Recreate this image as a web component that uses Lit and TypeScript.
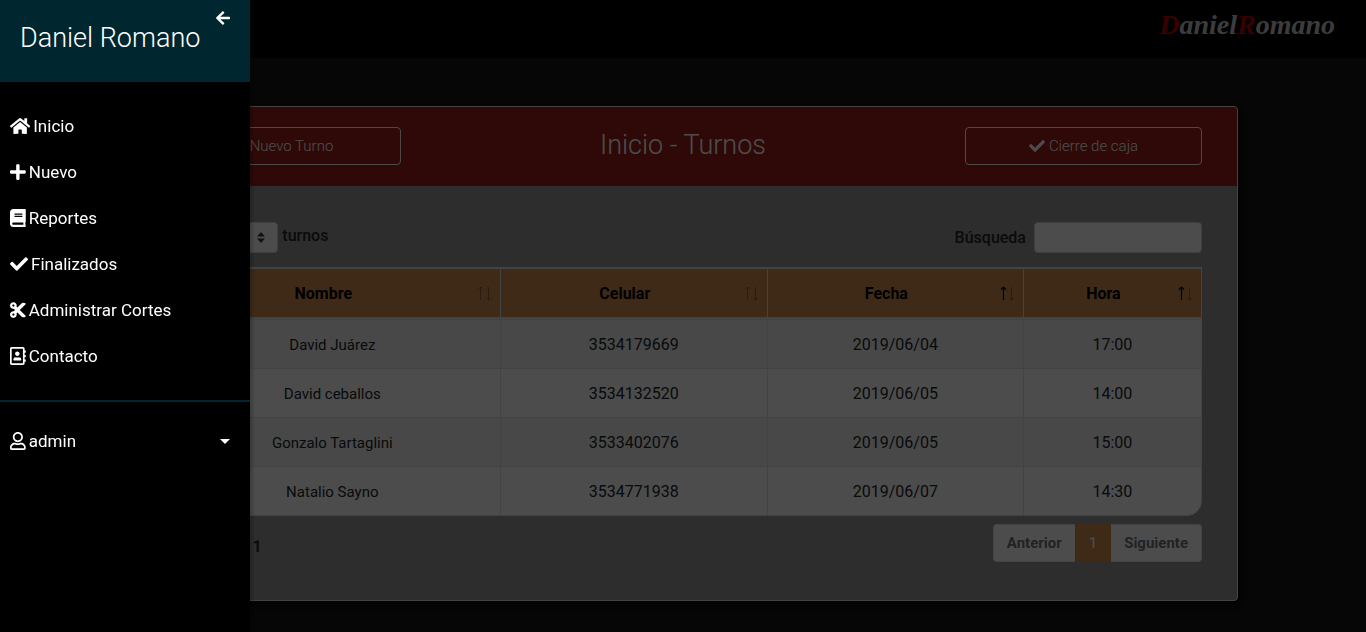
import { LitElement, html, css, svg } from "lit";
import { customElement, property } from "lit/decorators.js";

const ICONS: Record<string, [number, string]> = {
  check: [512, "M173.898 439.404l-166.4-166.4c-9.997-9.997-9.997-26.206 0-36.204l36.203-36.204c9.997-9.998 26.207-9.998 36.204 0L192 312.69 432.095 72.596c9.997-9.997 26.207-9.997 36.204 0l36.203 36.204c9.997 9.997 9.997 26.206 0 36.204l-294.4 294.401c-9.998 9.997-26.207 9.997-36.204-.001z"],
  plus: [448, "M416 208H272V64c0-17.67-14.33-32-32-32h-32c-17.67 0-32 14.33-32 32v144H32c-17.67 0-32 14.33-32 32v32c0 17.67 14.33 32 32 32h144v144c0 17.67 14.33 32 32 32h32c17.67 0 32-14.33 32-32V304h144c17.67 0 32-14.33 32-32v-32c0-17.67-14.33-32-32-32z"],
  book: [448, "M448 360V24c0-13.3-10.7-24-24-24H96C43 0 0 43 0 96v320c0 53 43 96 96 96h328c13.3 0 24-10.7 24-24v-16c0-7.5-3.5-14.3-8.9-18.7-4.2-15.4-4.2-59.3 0-74.7 5.4-4.3 8.9-11.1 8.9-18.6zM128 134c0-3.3 2.7-6 6-6h212c3.3 0 6 2.7 6 6v20c0 3.3-2.7 6-6 6H134c-3.3 0-6-2.7-6-6v-20zm0 64c0-3.3 2.7-6 6-6h212c3.3 0 6 2.7 6 6v20c0 3.3-2.7 6-6 6H134c-3.3 0-6-2.7-6-6v-20zm253.4 250H96c-17.7 0-32-14.3-32-32 0-17.6 14.4-32 32-32h285.4c-1.9 17.1-1.9 46.9 0 64z"],
  home: [576, "M280.37 148.26L96 300.11V464a16 16 0 0 0 16 16l112.06-.29a16 16 0 0 0 15.92-16V368a16 16 0 0 1 16-16h64a16 16 0 0 1 16 16v95.64a16 16 0 0 0 16 16.05L464 480a16 16 0 0 0 16-16V300L295.67 148.26a12.19 12.19 0 0 0-15.3 0zM571.6 251.47L488 182.56V44.05a12 12 0 0 0-12-12h-56a12 12 0 0 0-12 12v72.61L318.47 43a48 48 0 0 0-61 0L4.34 251.47a12 12 0 0 0-1.6 16.9l25.5 31A12 12 0 0 0 45.15 301l235.22-193.74a12.19 12.19 0 0 1 15.3 0L530.9 301a12 12 0 0 0 16.9-1.6l25.5-31a12 12 0 0 0-1.7-16.93z"],
  cut: [448, "M278.06 256L444.48 89.57c4.69-4.69 4.69-12.29 0-16.97-32.8-32.8-85.99-32.8-118.79 0L210.18 188.12l-24.86-24.86c4.31-10.92 6.68-22.81 6.68-35.26 0-53.02-42.98-96-96-96S0 74.98 0 128s42.98 96 96 96c4.54 0 8.99-.32 13.36-.93L142.29 256l-32.93 32.93c-4.37-.61-8.83-.93-13.36-.93-53.02 0-96 42.98-96 96s42.98 96 96 96 96-42.98 96-96c0-12.45-2.37-24.34-6.68-35.26l24.86-24.86L325.69 439.4c32.8 32.8 85.99 32.8 118.79 0 4.69-4.68 4.69-12.28 0-16.97L278.06 256zM96 160c-17.64 0-32-14.36-32-32s14.36-32 32-32 32 14.36 32 32-14.36 32-32 32zm0 256c-17.64 0-32-14.36-32-32s14.36-32 32-32 32 14.36 32 32-14.36 32-32 32z"],
  contact: [448, "M436 160c6.6 0 12-5.4 12-12v-40c0-6.6-5.4-12-12-12h-20V48c0-26.5-21.5-48-48-48H48C21.5 0 0 21.5 0 48v416c0 26.5 21.5 48 48 48h320c26.5 0 48-21.5 48-48v-48h20c6.6 0 12-5.4 12-12v-40c0-6.6-5.4-12-12-12h-20v-64h20c6.6 0 12-5.4 12-12v-40c0-6.6-5.4-12-12-12h-20v-64h20zm-68 304H48V48h320v416zM208 256c35.3 0 64-28.7 64-64s-28.7-64-64-64-64 28.7-64 64 28.7 64 64 64zm-89.6 128h179.2c12.4 0 22.4-8.6 22.4-19.2v-19.2c0-31.8-30.1-57.6-67.2-57.6-10.8 0-18.7 8-44.8 8-26.9 0-33.4-8-44.8-8-37.1 0-67.2 25.8-67.2 57.6v19.2c0 10.6 10 19.2 22.4 19.2z"],
  user: [448, "M313.6 304c-28.7 0-42.5 16-89.6 16-47.1 0-60.8-16-89.6-16C60.2 304 0 364.2 0 438.4V464c0 26.5 21.5 48 48 48h352c26.5 0 48-21.5 48-48v-25.6c0-74.2-60.2-134.4-134.4-134.4zM400 464H48v-25.6c0-47.6 38.8-86.4 86.4-86.4 14.6 0 38.3 16 89.6 16 51.7 0 74.9-16 89.6-16 47.6 0 86.4 38.8 86.4 86.4V464zM224 288c79.5 0 144-64.5 144-144S303.5 0 224 0 80 64.5 80 144s64.5 144 144 144zm0-240c52.9 0 96 43.1 96 96s-43.1 96-96 96-96-43.1-96-96 43.1-96 96-96z"],
  back: [448, "M257.5 445.1l-22.2 22.2c-9.4 9.4-24.6 9.4-33.9 0L7 273c-9.4-9.4-9.4-24.6 0-33.9L201.4 44.7c9.4-9.4 24.6-9.4 33.9 0l22.2 22.2c9.5 9.5 9.3 25-.4 34.3L136.6 216H424c13.3 0 24 10.7 24 24v32c0 13.3-10.7 24-24 24H136.6l120.5 114.8c9.8 9.3 10 24.8.4 34.3z"],
};

/** Monochrome glyph, one em tall, coloured by the surrounding text. */
@customElement("app-icon")
export class AppIcon extends LitElement {
  @property() name = "check";

  static styles = css`
    :host { display: inline-flex; flex: none; }
    svg { display: block; height: 1em; width: auto; fill: currentColor; }
  `;

  render() {
    const [width, path] = ICONS[this.name];
    return html`<svg viewBox="0 0 ${width} 512" aria-hidden="true">${svg`<path d=${path}></path>`}</svg>`;
  }
}

const MENU = [
  { icon: "home", label: "Inicio" },
  { icon: "plus", label: "Nuevo" },
  { icon: "book", label: "Reportes" },
  { icon: "check", label: "Finalizados" },
  { icon: "cut", label: "Administrar Cortes" },
  { icon: "contact", label: "Contacto" },
];

@customElement("app-sidebar")
export class AppSidebar extends LitElement {
  static styles = css`
    :host {
      position: fixed; top: 0; bottom: 0; left: 0; z-index: 3;
      width: 250px; background: #000; color: #fff;
      box-shadow: 3px 3px 3px rgba(0, 0, 0, 0.2);
    }
    .head {
      display: flex; align-items: flex-start; justify-content: space-between;
      height: 82px; box-sizing: border-box; padding: 0 20px; background: #00272f;
    }
    h3 { margin: 20px 0 0; font-size: 27px; line-height: 36px; font-weight: 300; white-space: nowrap; }
    .close {
      display: flex; margin: 10px 0 0; padding: 0; border: 0;
      background: none; color: inherit; font-size: 16px; cursor: pointer;
    }
    ul { list-style: none; margin: 0; padding: 21px 0; border-bottom: 2px solid #00272f; }
    .account { padding: 16px 0 0; border: 0; }
    a {
      display: flex; align-items: center; gap: 3px; padding: 10px;
      color: inherit; text-decoration: none; font-size: 17px; line-height: 26px;
    }
    app-icon { font-size: 18px; }
    .close app-icon { font-size: 16px; }
    .caret {
      margin: 0 10px 0 auto; border: 5px solid transparent;
      border-top-color: currentColor; border-bottom: 0;
    }
  `;

  render() {
    return html`
      <div class="head">
        <h3>Daniel Romano</h3>
        <button class="close" aria-label="Cerrar menú"><app-icon name="back"></app-icon></button>
      </div>
      <nav>
        <ul>
          ${MENU.map((m) => html`<li><a href="#"><app-icon name=${m.icon}></app-icon><span>${m.label}</span></a></li>`)}
        </ul>
        <ul class="account">
          <li><a href="#"><app-icon name="user"></app-icon><span>admin</span><span class="caret"></span></a></li>
        </ul>
      </nav>
    `;
  }
}

const COLUMNS = [
  { label: "Nombre", cls: "nombre", sorted: false },
  { label: "Celular", cls: "celular", sorted: false },
  { label: "Fecha", cls: "fecha", sorted: true },
  { label: "Hora", cls: "hora", sorted: true },
];

const ROWS = [
  ["David Juárez", "3534179669", "2019/06/04", "17:00"],
  ["David ceballos", "3534132520", "2019/06/05", "14:00"],
  ["Gonzalo Tartaglini", "3533402076", "2019/06/05", "15:00"],
  ["Natalio Sayno", "3534771938", "2019/06/07", "14:30"],
];

@customElement("app-root")
export class AppRoot extends LitElement {
  static styles = css`
    :host {
      display: block; min-height: 100vh; background: #151515; color: #212529;
      font-family: Roboto, "Liberation Sans", sans-serif; font-size: 16px; line-height: 24px;
    }
    * { box-sizing: border-box; }
    .overlay { position: fixed; inset: 0; z-index: 2; background: rgba(0, 0, 0, 0.7); }

    .navbar {
      display: flex; justify-content: flex-end; align-items: center;
      height: 58px; padding: 0 31px 8px; background: #030303;
    }
    .logo {
      font: italic bold 28px/40px "Liberation Serif", serif;
      color: #c8c8c8; text-decoration: none;
    }
    .logo b { color: #c00000; }

    main { max-width: 1140px; margin: 0 auto; padding: 48px 15px 30px; }
    .card {
      border: 1px solid #dfdfdf; border-radius: 4px; overflow: hidden;
      background: #979797; box-shadow: 4px 4px 8px rgba(0, 0, 0, 0.6);
    }
    .card-head {
      display: grid; grid-template-columns: 1fr 2fr 1fr;
      padding: 20px 20px 21px; background: #992118; color: #fff;
    }
    h1 { margin: 0; font-size: 27px; line-height: 36px; font-weight: 300; text-align: center; }
    .btn {
      display: flex; align-items: center; justify-content: center; gap: 4px;
      height: 38px; margin: 0 15px; border: 1px solid #f8f9fa; border-radius: 4px;
      background: transparent; color: inherit; font: inherit; font-size: 15px; font-weight: 300;
    }
    .btn app-icon { font-size: 16px; }

    .card-body { padding: 36px 35px 38px; font-weight: 500; }
    .controls { display: flex; justify-content: space-between; margin-bottom: 14px; }
    .controls label { display: flex; align-items: flex-start; gap: 4px; line-height: 28px; }
    .controls .search { align-items: center; gap: 8px; }
    .length {
      position: relative; display: flex; width: 54px;
    }
    select, input {
      height: 31px; border: 1px solid #ced4da; border-radius: 4px;
      background: #fff; color: #495057; font: inherit; font-size: 14px;
    }
    select { appearance: none; width: 100%; padding: 0 8px; }
    .length svg { position: absolute; right: 12px; top: 10px; width: 10px; height: 11px; fill: #343a40; }
    input { width: 168px; padding: 0 8px; }

    table {
      width: 100%; table-layout: fixed; border-collapse: separate; border-spacing: 0;
      border: 1px solid #dee2e6; border-radius: 0 0 15px 0; overflow: hidden;
      background: #fff; text-align: center;
    }
    th, td { border-top: 1px solid #dee2e6; border-left: 1px solid #dee2e6; padding: 2px 12px 0; }
    th:first-child, td:first-child { border-left: 0; }
    th {
      height: 51px; padding-right: 8px; border-bottom: 2px solid #dee2e6;
      background: #d28e52; color: #000; font-size: 16px; font-weight: 700;
    }
    td { height: 49px; font-size: 16px; font-weight: 400; }
    td:first-child { font-size: 15px; }
    tbody tr:nth-child(odd) { background: #f2f2f2; }
    .th { display: grid; grid-template-columns: 1fr 22px; align-items: center; }
    .arrows { justify-self: end; width: 16px; height: 16px; fill: none; stroke: #000; stroke-width: 1; }
    .arrows path { opacity: 0.3; }
    .arrows .on { opacity: 1; stroke-width: 1.2; }
    .nombre { width: 32.3%; }
    .celular { width: 25.8%; }
    .fecha { width: 24.7%; }

    .foot { display: flex; justify-content: space-between; align-items: flex-start; margin-top: 8px; }
    .info { padding-top: 11px; font-weight: 700; }
    .pages { display: flex; margin: 0; padding: 0; list-style: none; }
    .pages a {
      display: block; height: 38px; padding: 6px 13px; border: 1px solid #dee2e6;
      background: #fff; color: #6c757d; text-decoration: none; font-weight: 700; font-size: 15px;
    }
    .pages li:first-child a { border-radius: 4px 0 0 4px; border-right: 0; }
    .pages li:last-child a { border-radius: 0 4px 4px 0; border-left: 0; }
    .pages .active { border-color: #d28e52; background: #d28e52; color: #fff; font-weight: 400; }
  `;

  render() {
    return html`
      <header class="navbar">
        <a class="logo" href="#"><b>D</b>aniel<b>R</b>omano</a>
      </header>
      <main>
        <section class="card">
          <div class="card-head">
            <button class="btn"><app-icon name="plus"></app-icon>Nuevo Turno</button>
            <h1>Inicio - Turnos</h1>
            <button class="btn"><app-icon name="check"></app-icon>Cierre de caja</button>
          </div>
          <div class="card-body">
            <div class="controls">
              <label>Mostrar
                <span class="length">
                  <select><option>10</option><option>25</option><option>50</option></select>
                  <svg viewBox="0 0 10 11" aria-hidden="true"><path d="M5 0L9 4.5H1zM5 11L1 6.5h8z"></path></svg>
                </span>
                turnos
              </label>
              <label class="search">Búsqueda <input type="search" /></label>
            </div>
            <table>
              <thead>
                <tr>
                  ${COLUMNS.map((c) => html`
                    <th class=${c.cls} scope="col">
                      <div class="th">
                        <span>${c.label}</span>
                        <svg class="arrows" viewBox="0 0 16 16" aria-hidden="true">
                          <path class=${c.sorted ? "on" : ""} d="M4.5 14V1M2 3.500L4.500 1L7 3.500"></path>
                          <path d="M12.500 1v13M10 11.500l2.500 2.500l2.500-2.500"></path>
                        </svg>
                      </div>
                    </th>`)}
                </tr>
              </thead>
              <tbody>
                ${ROWS.map((r) => html`<tr>${r.map((v) => html`<td>${v}</td>`)}</tr>`)}
              </tbody>
            </table>
            <div class="foot">
              <div class="info">Página 1 de 1</div>
              <ul class="pages">
                <li><a href="#">Anterior</a></li>
                <li><a class="active" href="#">1</a></li>
                <li><a href="#">Siguiente</a></li>
              </ul>
            </div>
          </div>
        </section>
      </main>
      <div class="overlay"></div>
      <app-sidebar></app-sidebar>
    `;
  }
}
